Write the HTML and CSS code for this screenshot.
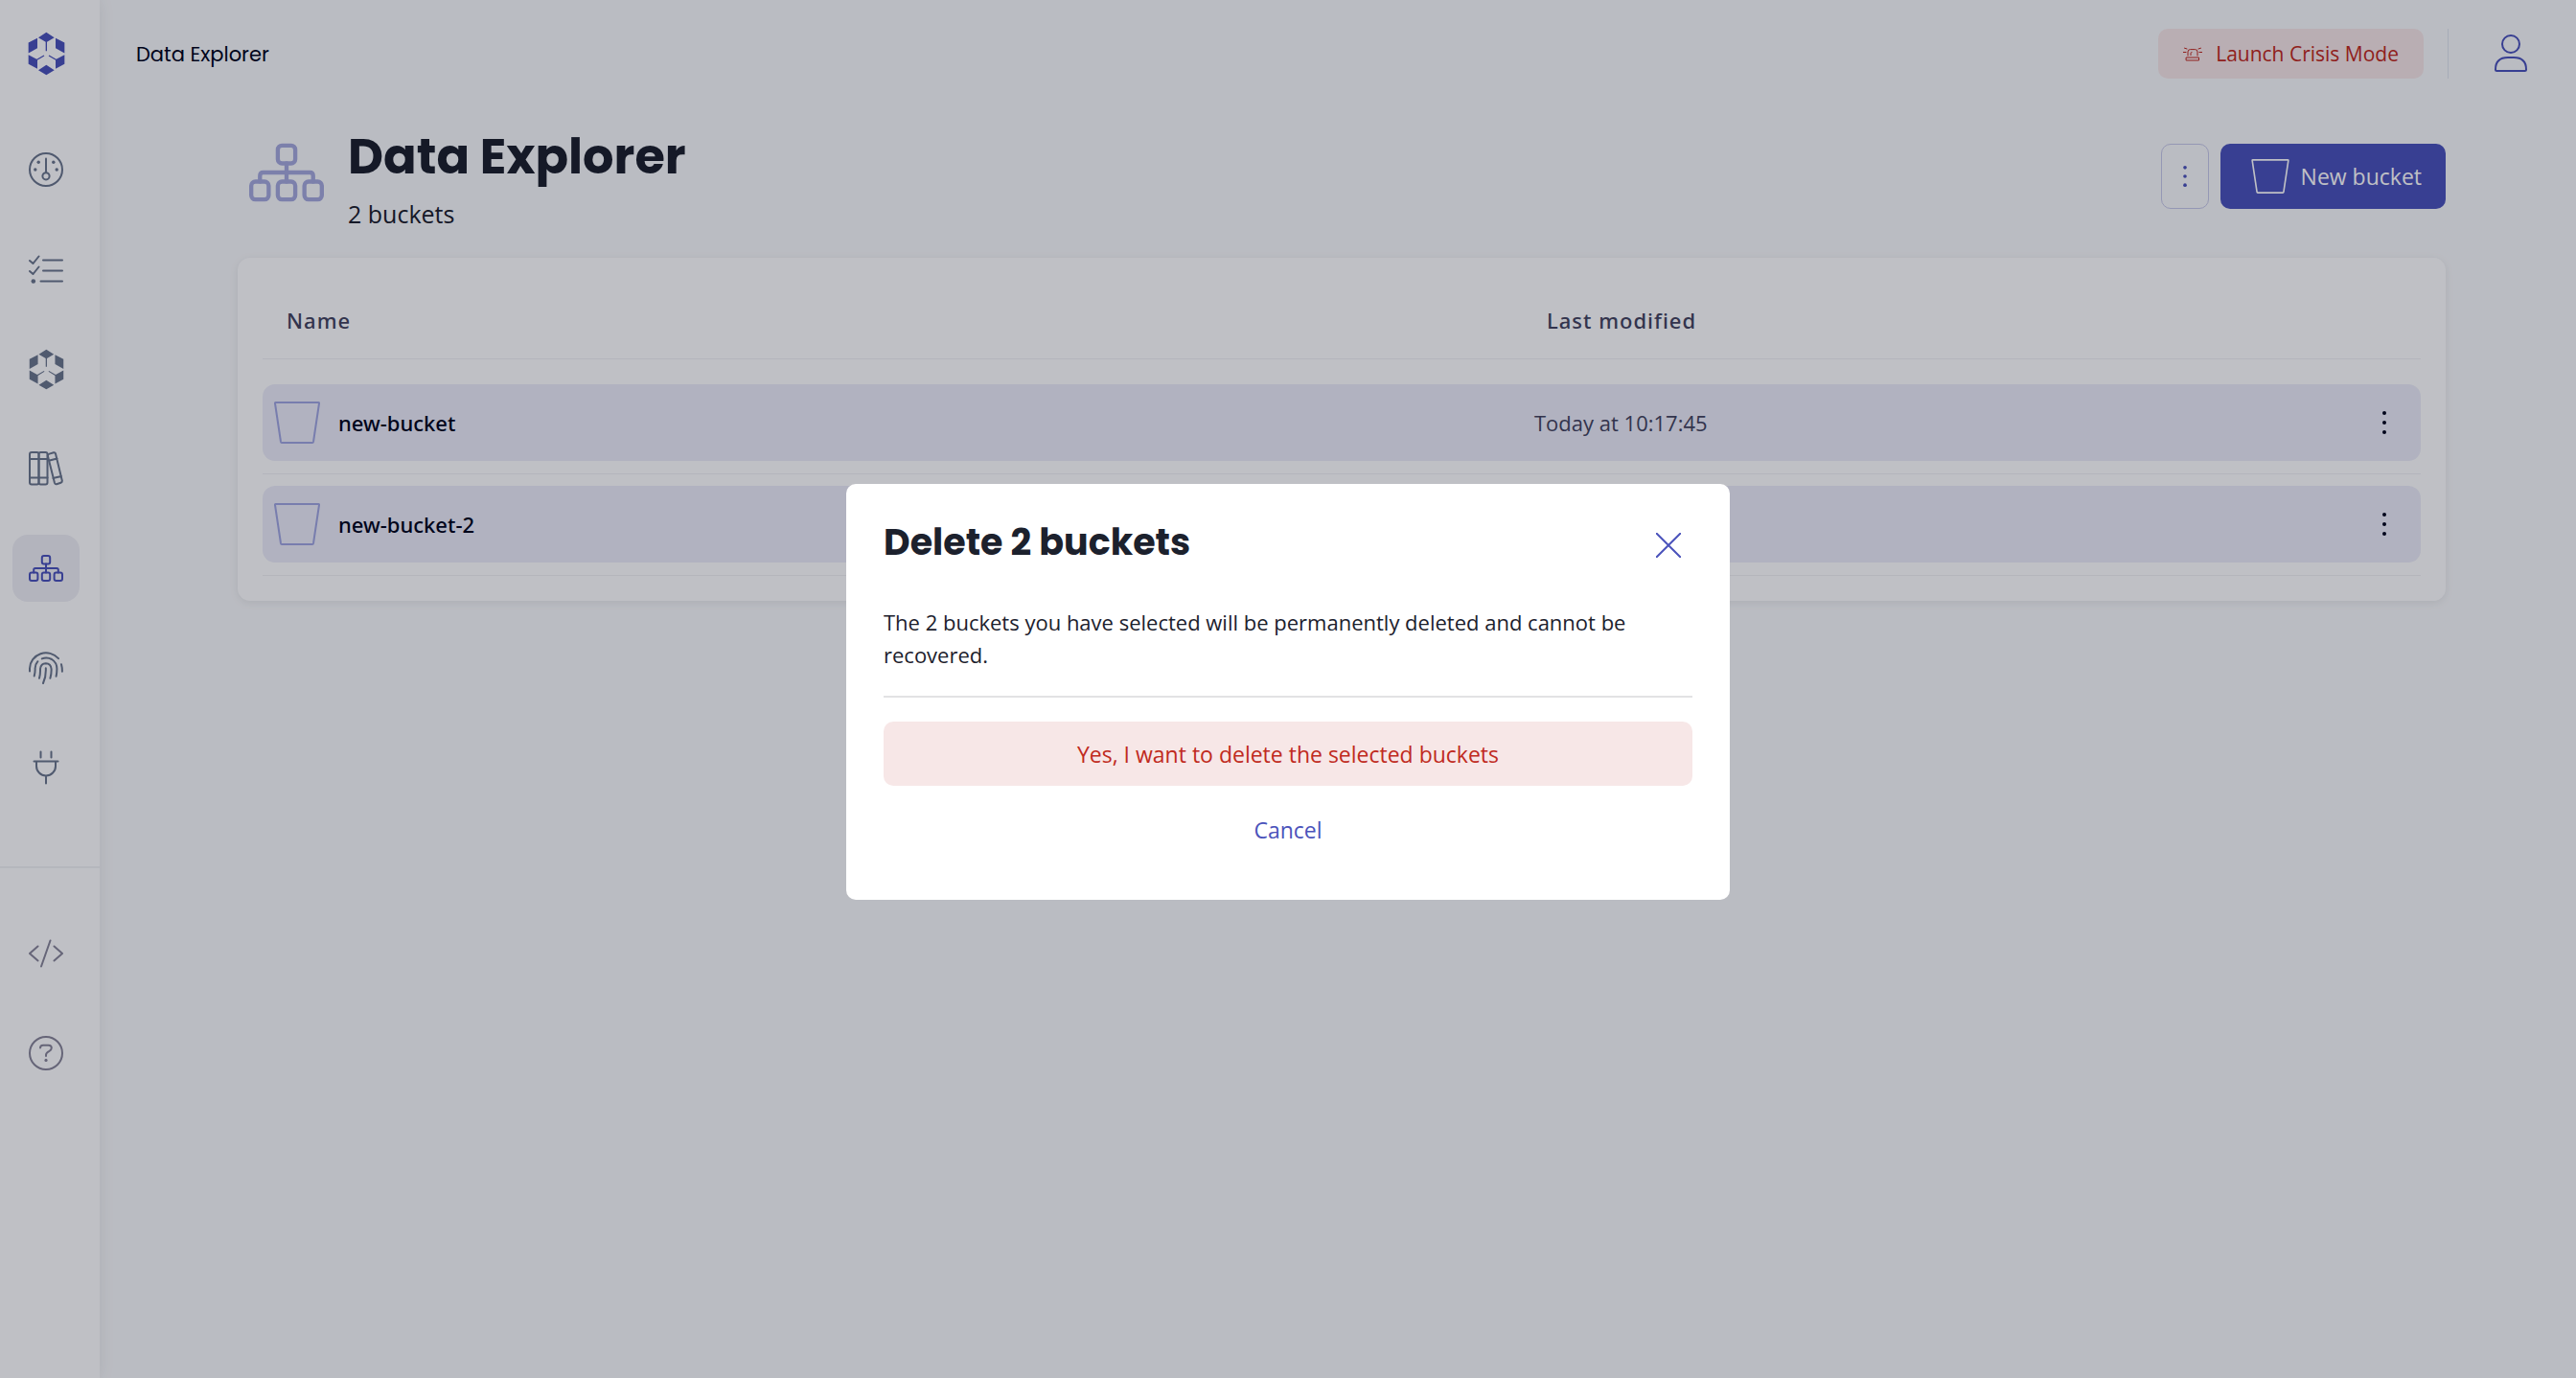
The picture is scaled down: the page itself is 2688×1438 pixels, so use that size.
FILE: index.html
```
<!DOCTYPE html>
<html lang="en">
<head>
  <meta charset="UTF-8" />
  <meta name="viewport" content="width=device-width, initial-scale=1.0" />
  <title>Data Explorer</title>
  <link rel="stylesheet" href="styles.css">
</head>
<body>
  <!-- Shared icons -->
  <svg class="icon-defs" aria-hidden="true">
    <symbol id="icon-hex" viewBox="87 100 117 137">
      <path fill="currentColor" d="M120 118L145 102L170 118L147 132V160H143V132ZM89 134L117 120V151L89 167ZM202 134L174 120V151L202 167ZM89 172L115 186L137 173L139 176L117 189V216L89 201ZM202 172L176 186L154 173L152 176L174 189V216L202 201ZM120 220L145 204L170 220L145 235Z"/>
    </symbol>
    <symbol id="icon-sitemap" viewBox="0 0 36 28">
      <rect x="13.8" y="1" width="8.4" height="8.6" rx="2"/>
      <rect x="1" y="18.4" width="8.4" height="8.6" rx="2"/>
      <rect x="13.8" y="18.4" width="8.4" height="8.6" rx="2"/>
      <rect x="26.6" y="18.4" width="8.4" height="8.6" rx="2"/>
      <path d="M18 9.6V18.4M5.2 18.4V15.6Q5.2 14 6.8 14H29.2Q30.8 14 30.8 15.6V18.4"/>
    </symbol>
    <symbol id="icon-bucket" viewBox="0 0 48 44">
      <path d="M1.6 1H46.4Q47.2 1 47 2L41 42Q40.8 43 40 43H8Q7.2 43 7 42L1 2Q.8 1 1.6 1Z"/>
    </symbol>
    <symbol id="icon-dots" viewBox="0 0 4 24">
      <circle cx="2" cy="2" r="2"/><circle cx="2" cy="12" r="2"/><circle cx="2" cy="22" r="2"/>
    </symbol>
  </svg>

  <div class="app">
    <aside class="sidebar">
      <a class="logo" href="#" aria-label="Home"><svg width="39" height="46"><use href="#icon-hex"/></svg></a>
      <nav class="nav">
        <a class="nav-item" href="#" aria-label="Dashboard">
          <svg width="36" height="36" viewBox="0 0 36 36">
            <circle cx="18" cy="18" r="17"/>
            <circle cx="18" cy="24.8" r="3.6"/>
            <path d="M18 6.5V21"/>
            <g class="dot"><circle cx="6.8" cy="18" r="1.7"/><circle cx="10.2" cy="10.2" r="1.7"/><circle cx="25.8" cy="10.2" r="1.7"/><circle cx="29.2" cy="18" r="1.7"/></g>
          </svg>
        </a>
        <a class="nav-item" href="#" aria-label="Tasks">
          <svg width="36" height="30" viewBox="0 0 36 30">
            <path d="M1 6L4.5 9L10.5 1.5M1 17L4.5 20L10.5 12.5M15 5.5H35M15 16.5H35M12.5 27.5H35"/>
            <circle class="dot" cx="4.8" cy="27.5" r="2.3"/>
          </svg>
        </a>
        <a class="nav-item" href="#" aria-label="Clusters"><svg width="37" height="43"><use href="#icon-hex"/></svg></a>
        <a class="nav-item" href="#" aria-label="Library">
          <svg width="36" height="36" viewBox="0 0 36 36">
            <rect x="1" y="1" width="9.5" height="33.5" rx="2"/>
            <rect x="10.5" y="1" width="9" height="33.5" rx="2"/>
            <path d="M1 8H19.5M1 27.5H19.5"/>
            <path d="M21.5 2.6L26 1.3Q27.5 1 28 2.4L34.8 30.5Q35 32.2 33.5 32.7L29 34.3Q27.6 34.6 27 33L19.8 4.5Q19.8 3.1 21.5 2.6ZM20.8 9.7L29.6 7.5M25.3 28L34 26"/>
          </svg>
        </a>
        <a class="nav-item active" href="#" aria-label="Data Explorer"><svg width="36" height="28"><use href="#icon-sitemap"/></svg></a>
        <a class="nav-item" href="#" aria-label="Identity">
          <svg width="36" height="34" viewBox="0 0 36 34">
            <path d="M1 20.5V17.5A17 16.5 0 0 1 31 7.2M34 13.2Q35 17 34.9 20.8M5.7 25.5Q6.8 22 6.6 17.5Q6.6 13.5 9.4 10.2M13.8 7.4Q19 5.4 24 8Q29.4 11.4 29.4 18Q29.4 22 28.6 25.8M11 27.8Q12.2 23 12 18Q12.6 12.4 17.8 12.2Q23 12.4 23.6 18Q23.8 23 22.4 27.8M17.8 17.2Q18.2 26 15 33"/>
          </svg>
        </a>
        <a class="nav-item" href="#" aria-label="Plugins">
          <svg width="36" height="36" viewBox="0 0 36 36">
            <path d="M12.5 1.5V7.5M23.5 1.5V7.5M5.5 11.5H30.5M8 11.5V16.5A10 10 0 0 0 28 16.5V11.5M18 27V34.5"/>
          </svg>
        </a>
      </nav>
      <nav class="nav nav-bottom">
        <a class="nav-item" href="#" aria-label="API">
          <svg width="36" height="30" viewBox="0 0 36 30">
            <path d="M9.5 7.5L1 15L9.5 22.5M26.5 7.5L35 15L26.5 22.5M22.5 1.5L13 28.5"/>
          </svg>
        </a>
        <a class="nav-item" href="#" aria-label="Help">
          <svg width="36" height="36" viewBox="0 0 36 36">
            <circle cx="18" cy="18" r="17"/>
            <path d="M12 12.5Q12 9.7 15 9.7H20.5Q23.8 9.7 23.8 12.6Q23.8 14.6 21.5 15.8Q18 17.5 18 19.8V21"/>
            <circle class="dot" cx="18" cy="25.4" r="1.6"/>
          </svg>
        </a>
      </nav>
    </aside>

    <div class="main">
      <header class="topbar">
        <span class="breadcrumb">Data Explorer</span>
        <button type="button" class="btn btn-danger btn-crisis">
          <svg width="20" height="15" viewBox="0 0 20 15">
            <rect x="3.5" y="11" width="13" height="3"/>
            <path d="M5 9V5Q5 2.6 7.5 2.6H12.5Q15 2.6 15 5V9M8 8.5V6.5Q8 5.5 9 5.5M0 5.5H3M17 5.5H20M1.5 1.2L4 2M18.5 1.2L16 2"/>
          </svg>
          Launch Crisis Mode
        </button>
        <button type="button" class="user" aria-label="Account">
          <svg width="36" height="40" viewBox="0 0 36 40">
            <circle cx="18" cy="10" r="9"/>
            <path d="M2 36.5Q2 24 15 24H21Q34 24 34 36.5Q34 38 32.5 38H3.5Q2 38 2 36.5Z"/>
          </svg>
        </button>
      </header>

      <main class="content">
        <div class="page-header">
          <svg class="page-icon" width="78" height="62"><use href="#icon-sitemap"/></svg>
          <div class="page-title">
            <h1>Data Explorer</h1>
            <p>2 buckets</p>
          </div>
          <button type="button" class="btn btn-outline" aria-label="More actions"><svg class="dots" width="4" height="22"><use href="#icon-dots"/></svg></button>
          <button type="button" class="btn btn-primary"><svg width="40" height="36"><use href="#icon-bucket"/></svg>New bucket</button>
        </div>

        <div class="card">
          <table class="bucket-table">
            <thead>
              <tr>
                <th class="col-name">Name</th>
                <th class="col-date">Last modified</th>
                <th class="col-menu"></th>
              </tr>
            </thead>
            <tbody>
              <tr>
                <td><div class="cell cell-name"><svg width="48" height="44"><use href="#icon-bucket"/></svg>new-bucket</div></td>
                <td><div class="cell">Today at 10:17:45</div></td>
                <td><div class="cell cell-menu"><button type="button" class="row-menu" aria-label="Bucket actions"><svg class="dots" width="4" height="24"><use href="#icon-dots"/></svg></button></div></td>
              </tr>
              <tr>
                <td><div class="cell cell-name"><svg width="48" height="44"><use href="#icon-bucket"/></svg>new-bucket-2</div></td>
                <td><div class="cell">Today at 10:17:45</div></td>
                <td><div class="cell cell-menu"><button type="button" class="row-menu" aria-label="Bucket actions"><svg class="dots" width="4" height="24"><use href="#icon-dots"/></svg></button></div></td>
              </tr>
            </tbody>
          </table>
        </div>
      </main>
    </div>
  </div>

  <div class="overlay">
    <div class="modal" role="dialog" aria-modal="true" aria-labelledby="modalTitle">
      <div class="modal-header">
        <h2 id="modalTitle">Delete 2 buckets</h2>
        <button type="button" class="close" aria-label="Close">
          <svg width="26" height="26" viewBox="0 0 26 26"><path d="M0 0L26 26M26 0L0 26"/></svg>
        </button>
      </div>
      <p class="modal-text">The 2 buckets you have selected will be permanently deleted and cannot be recovered.</p>
      <div class="modal-actions">
        <button type="button" class="btn btn-danger btn-delete">Yes, I want to delete the selected buckets</button>
        <button type="button" class="btn btn-link">Cancel</button>
      </div>
    </div>
  </div>
</body>
</html>
```

FILE: styles.css
```
* { margin: 0; padding: 0; box-sizing: border-box; }

body {
  font-family: "Open Sans", "Noto Sans", sans-serif;
  font-size: 22px;
  color: #1c212d;
  background-color: #f9fafb;
}

svg {
  flex-shrink: 0;
  fill: none;
  stroke: currentColor;
  stroke-width: 2;
  stroke-linecap: round;
  stroke-linejoin: round;
}

button {
  font: inherit;
  color: inherit;
  background: none;
  border: none;
  cursor: pointer;
}

.icon-defs { display: none; }

.dots, .dot { fill: currentColor; stroke: none; }

.app {
  display: flex;
  min-height: 100vh;
}

/* Sidebar */
.sidebar {
  width: 104px;
  flex-shrink: 0;
  background-color: white;
  box-shadow: 0 0 16px rgba(0,0,0,0.08);
}

.logo {
  display: flex;
  align-items: center;
  height: 112px;
  padding-left: 29px;
  color: #4b53bb;
}

.logo svg, .nav-item svg:has(use[href="#icon-hex"]) { stroke: none; }

.nav {
  display: flex;
  flex-direction: column;
  gap: 34px;
  padding: 30px 0 68px 13px;
}

.nav-item {
  display: flex;
  align-items: center;
  justify-content: center;
  width: 70px;
  height: 70px;
  border-radius: 16px;
  color: #6b778d;
}

.nav-item.active {
  color: #4b53bb;
  background-color: #efeff4;
}

.nav-bottom {
  padding-top: 54px;
  border-top: 2px solid #f2f3f5;
}

.nav-bottom .nav-item { color: #888699; }

/* Top bar */
.main {
  flex: 1;
  min-width: 0;
  padding-left: 8px;
}

.topbar {
  display: flex;
  align-items: center;
  height: 112px;
  padding: 0 50px 0 30px;
}

.breadcrumb {
  flex: 1;
  font-family: Poppins, Inter, sans-serif;
  font-size: 21px;
  color: #00051c;
}

.user {
  display: flex;
  align-items: center;
  height: 52px;
  margin-left: 25px;
  padding-left: 47px;
  border-left: 1px solid #dfe5ee;
  color: #4b53bb;
}

/* Buttons */
.btn {
  display: flex;
  align-items: center;
  justify-content: center;
  border-radius: 10px;
  font-size: 23px;
  font-weight: 500;
}

.btn-danger {
  color: #c02a20;
  background-color: #f7e7e7;
}

.btn-crisis {
  height: 52px;
  padding: 0 26px;
  gap: 14px;
  font-size: 21px;
}

.btn-crisis svg { stroke-width: 1; }

.btn-outline {
  width: 50px;
  height: 68px;
  border: 1px solid #c6c8e8;
  color: #4b53bb;
}

.btn-primary {
  height: 68px;
  margin-left: 12px;
  padding: 0 25px 0 32px;
  gap: 12px;
  color: white;
  background-color: #4b53bb;
}

.btn-link { color: #4b53bb; }

/* Page */
.content {
  max-width: 2576px;
  margin: 0 auto;
  padding: 12px 136px 40px;
}

.page-header {
  display: flex;
  align-items: center;
  margin-bottom: 25px;
}

.page-icon {
  margin: 0 25px 8px 12px;
  color: #a6aadd;
}

.page-title { flex: 1; }

h1, h2 {
  font-family: Poppins, Inter, sans-serif;
  font-weight: 700;
}

h1 {
  font-size: 51px;
  line-height: 78px;
}

.page-title p {
  font-size: 25px;
  line-height: 42px;
}

.card {
  padding: 24px 26px 26px;
  background-color: white;
  border-radius: 13px;
  box-shadow: 0 2px 10px rgba(0,0,0,0.08);
}

.bucket-table {
  width: 100%;
  border-spacing: 0;
  table-layout: fixed;
  color: #44455f;
}

.bucket-table th {
  height: 82px;
  border-bottom: 1px solid #f0f1f3;
  text-align: left;
  font-family: "Noto Sans", sans-serif;
  font-weight: 500;
  letter-spacing: 1px;
}

.col-name { padding-left: 25px; }
.col-date { width: 790px; padding-left: 13px; }
.col-menu { width: 135px; }

.bucket-table td {
  padding: 12px 0 13px;
  border-bottom: 1px solid #f0f1f3;
}

.bucket-table tbody tr:first-child td { padding-top: 26px; }

.cell {
  display: flex;
  align-items: center;
  height: 80px;
  background-color: #ecedf8;
}

.cell-name {
  gap: 19px;
  padding-left: 12px;
  border-radius: 13px 0 0 13px;
  color: #00051c;
  font-family: "Noto Sans", sans-serif;
  font-weight: 500;
}

.cell-name svg { color: #a0a6e0; }

.cell-menu {
  justify-content: flex-end;
  padding-right: 22px;
  border-radius: 0 13px 13px 0;
}

.row-menu {
  display: flex;
  padding: 14px;
  color: #00051c;
}

/* Modal */
.overlay {
  position: fixed;
  inset: 0;
  z-index: 100;
  display: flex;
  align-items: center;
  justify-content: center;
  padding-top: 6px;
  background-color: rgba(0,3,24,0.25);
}

.modal {
  width: 922px;
  padding: 39px 39px 40px;
  background-color: white;
  border-radius: 10px;
}

.modal-header {
  display: flex;
  align-items: flex-start;
  justify-content: space-between;
}

.modal-header h2 {
  font-size: 38px;
  line-height: 44px;
}

.close {
  display: flex;
  padding: 12px;
  color: #4b53bb;
}

.modal-text {
  margin-top: 38px;
  padding-bottom: 26px;
  border-bottom: 2px solid #e2e2e4;
  line-height: 34px;
}

.modal-actions {
  display: flex;
  flex-direction: column;
  gap: 12px;
  margin-top: 25px;
}

.modal-actions .btn { height: 67px; }
```
